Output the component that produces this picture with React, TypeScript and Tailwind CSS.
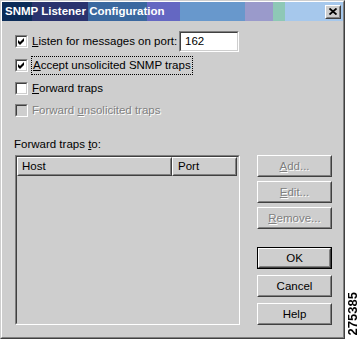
import React from 'react'

const raised =
  'border border-t-white border-l-white border-r-[#404040] border-b-[#404040]'
const raisedInner = 'border border-t-[#cecece] border-l-[#cecece] border-r-[#808080] border-b-[#808080]'
const disabledText = 'text-[#808080] [text-shadow:1px_1px_0_#fff]'

function CheckBox({ checked, disabled }: { checked?: boolean; disabled?: boolean }) {
  return (
    <span className="block w-[13px] h-[13px] shrink-0 border border-t-[#808080] border-l-[#808080] border-r-white border-b-white">
      <span
        className={
          'flex items-center justify-center w-full h-full border border-t-[#404040] border-l-[#404040] border-r-[#cecece] border-b-[#cecece] ' +
          (disabled ? 'bg-[#cecece]' : 'bg-white')
        }
      >
        {checked && (
          <svg width="7" height="7" viewBox="0 0 7 7">
            <path d="M0 2 L2 4 L6 0 L6 3 L2 7 L0 5 Z" fill="#000" />
          </svg>
        )}
      </span>
    </span>
  )
}

function Button({
  children,
  disabled,
  isDefault,
  className = '',
}: {
  children: React.ReactNode
  disabled?: boolean
  isDefault?: boolean
  className?: string
}) {
  return (
    <div
      className={
        'w-[75px] h-[22px] ' + (isDefault ? 'border border-black ' : '') + className
      }
    >
      <div className={'w-full h-full ' + raised}>
        <div
          className={
            'w-full h-full flex items-center justify-center ' +
            raisedInner +
            ' ' +
            (disabled ? disabledText : 'text-black')
          }
        >
          {children}
        </div>
      </div>
    </div>
  )
}

export default function App() {
  return (
    <div className="flex w-[359px] h-[340px] bg-white font-['Liberation_Sans',Arial,sans-serif] text-[11.5px] leading-[13px] text-black">
      <div className="w-[345px] h-[339px] border border-t-[#cecece] border-l-[#cecece] border-r-[#404040] border-b-[#404040]">
        <div className="w-full h-full flex flex-col bg-[#cecece] border border-t-white border-l-white border-r-[#808080] border-b-[#808080]">
          {/* title bar */}
          <div className="h-[19px] flex items-center justify-between pl-[3px] pr-[2px] bg-[linear-gradient(to_right,#0b2c58_0px,#0b2c58_30px,#2a336e_30px,#2a336e_86px,#3a689f_86px,#3a689f_145px,#6467c2_145px,#6467c2_178px,#6898cc_178px,#6898cc_243px,#9a9acb_243px,#9a9acb_271px,#8ec8b6_271px,#8ec8b6_283px,#a6c8ec_283px,#a6c8ec_100%)]">
            <span className="text-white font-bold text-[11.5px]">SNMP Listener Configuration</span>
            <div className={'w-[16px] h-[14px] ' + raised}>
              <div className={'w-full h-full flex items-center justify-center bg-[#cecece] ' + raisedInner}>
                <svg width="8" height="7" viewBox="0 0 8 7">
                  <path d="M0.5 0.5 L7.5 6.5 M7.5 0.5 L0.5 6.5" stroke="#000" strokeWidth="1.8" />
                </svg>
              </div>
            </div>
          </div>

          {/* content */}
          <div className="flex flex-col pl-[13px] pt-[10px]">
            <div className="flex items-center h-[21px]">
              <CheckBox checked />
              <span className="ml-[4px] w-[147px]">
                <u>L</u>isten for messages on port:
              </span>
              <div className="w-[60px] h-[21px] border border-t-[#808080] border-l-[#808080] border-r-white border-b-white">
                <div className="w-full h-full flex items-center pl-[4px] bg-white border border-t-[#404040] border-l-[#404040] border-r-[#cecece] border-b-[#cecece]">
                  162
                </div>
              </div>
            </div>

            <div className="flex items-center h-[19px] mt-[4px]">
              <CheckBox checked />
              <span className="ml-[3px] px-[1px] py-[2px] border border-dotted border-black">
                <u>A</u>ccept unsolicited SNMP traps
              </span>
            </div>

            <div className="flex items-center h-[19px] mt-[4px]">
              <CheckBox />
              <span className="ml-[4px]">
                <u>F</u>orward traps
              </span>
            </div>

            <div className="flex items-center h-[19px] mt-[3px]">
              <CheckBox disabled />
              <span className={'ml-[4px] ' + disabledText}>
                Forward <u>u</u>nsolicited traps
              </span>
            </div>

            <div className="mt-[18px] -ml-[1px]">
              Forward traps <u>t</u>o:
            </div>

            <div className="flex mt-[4px]">
              {/* list view */}
              <div className="w-[225px] h-[170px] border border-t-[#808080] border-l-[#808080] border-r-white border-b-white">
                <div className="w-full h-full border border-t-[#404040] border-l-[#404040] border-r-[#cecece] border-b-[#cecece]">
                  <div className="flex h-[19px]">
                    <div className={'w-[155px] h-full ' + raised}>
                      <div className={'w-full h-full flex items-center pl-[3px] ' + raisedInner}>Host</div>
                    </div>
                    <div className={'w-[65px] h-full ' + raised}>
                      <div className={'w-full h-full flex items-center pl-[4px] ' + raisedInner}>Port</div>
                    </div>
                  </div>
                </div>
              </div>

              {/* buttons */}
              <div className="flex flex-col ml-[17px]">
                <Button disabled>
                  <u>A</u>dd...
                </Button>
                <Button disabled className="mt-[4px]">
                  <u>E</u>dit...
                </Button>
                <Button disabled className="mt-[4px]">
                  <u>R</u>emove...
                </Button>
                <Button isDefault className="mt-[18px]">
                  OK
                </Button>
                <Button className="mt-[6px]">Cancel</Button>
                <Button className="mt-[6px]">Help</Button>
              </div>
            </div>
          </div>
        </div>
      </div>

      <div className="flex-1 flex items-end justify-center pb-[5px]">
        <span className="[writing-mode:vertical-rl] rotate-180 text-[13px] leading-[13px] font-bold">275385</span>
      </div>
    </div>
  )
}
